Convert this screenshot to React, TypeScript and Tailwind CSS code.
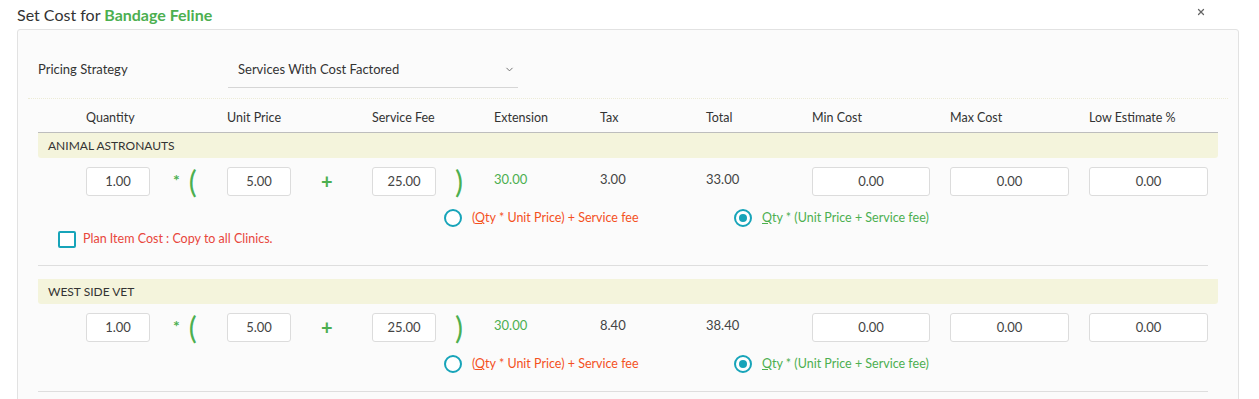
import { ChevronDown, X } from 'lucide-react'

interface Clinic {
  name: string
  qty: string
  unit: string
  fee: string
  ext: string
  tax: string
  total: string
  showCopy?: boolean
}

const clinics: Clinic[] = [
  { name: 'ANIMAL ASTRONAUTS', qty: '1.00', unit: '5.00', fee: '25.00', ext: '30.00', tax: '3.00', total: '33.00', showCopy: true },
  { name: 'WEST SIDE VET', qty: '1.00', unit: '5.00', fee: '25.00', ext: '30.00', tax: '8.40', total: '38.40' },
]

const headers = ['Quantity', 'Unit Price', 'Service Fee', 'Extension', 'Tax', 'Total', 'Min Cost', 'Max Cost', 'Low Estimate %']

const cols = 'grid grid-cols-[141px_145px_122px_106px_106px_106px_138px_139px_119px] pl-[48px]'

function NumBox({ value, w }: { value: string; w: string }) {
  return (
    <div className={`${w} h-[29px] bg-white border border-[#dcdcdc] rounded-[3px] flex items-center justify-center text-[13px] text-[#444]`}>
      {value}
    </div>
  )
}

function Radio({ checked }: { checked?: boolean }) {
  return (
    <span className="w-[18px] h-[18px] shrink-0 rounded-full border-2 border-[#17a4b9] flex items-center justify-center bg-white">
      {checked && <span className="w-[8px] h-[8px] rounded-full bg-[#17a4b9]" />}
    </span>
  )
}

function ClinicBlock({ c }: { c: Clinic }) {
  return (
    <div>
      <div className="h-[25px] bg-[#f4f4dc] rounded-b-[3px] pl-[10px] flex items-center text-[12px] text-[#333]">
        {c.name}
      </div>

      {/* inputs */}
      <div className={`${cols} mt-[9px] h-[29px]`}>
        <div className="flex items-start">
          <NumBox value={c.qty} w="w-[64px]" />
          <span className="ml-[23px] mt-[5px] text-[16px] font-bold text-[#4caf50] leading-none">*</span>
          <span className="ml-[9px] -mt-[3px] text-[30px] text-[#4caf50] leading-[34px]">(</span>
        </div>
        <div className="flex items-start">
          <NumBox value={c.unit} w="w-[64px]" />
          <span className="ml-[30px] mt-[4px] text-[20px] font-bold text-[#4caf50] leading-[20px]">+</span>
        </div>
        <div className="flex items-start">
          <NumBox value={c.fee} w="w-[64px]" />
          <span className="ml-[19px] -mt-[3px] text-[30px] text-[#4caf50] leading-[34px]">)</span>
        </div>
        <div className="text-[13px] text-[#4caf50] pt-[4px] leading-[16px]">{c.ext}</div>
        <div className="text-[13px] text-[#444] pt-[4px] leading-[16px]">{c.tax}</div>
        <div className="text-[13px] text-[#444] pt-[4px] leading-[16px]">{c.total}</div>
        <NumBox value="0.00" w="w-[118px]" />
        <NumBox value="0.00" w="w-[119px]" />
        <NumBox value="0.00" w="w-[119px]" />
      </div>

      {/* formula choice */}
      <div className="flex items-center h-[18px] mt-[13px] pl-[406px] text-[12.5px]">
        <div className="w-[290px] flex items-center">
          <Radio />
          <span className="ml-[10px] text-[#f4511e]">
            (<span className="underline">Q</span>ty * Unit Price) + Service fee
          </span>
        </div>
        <div className="flex items-center">
          <Radio checked />
          <span className="ml-[10px] text-[#4caf50]">
            <span className="underline">Q</span>ty * (Unit Price + Service fee)
          </span>
        </div>
      </div>

      {c.showCopy ? (
        <div className="flex items-center h-[17px] mt-[4px] pl-[20px] text-[12.5px]">
          <span className="w-[18px] h-[17px] border-2 border-[#17a4b9] rounded-[2px] bg-white" />
          <span className="ml-[7px] text-[#e8463b]">Plan Item Cost : Copy to all Clinics.</span>
        </div>
      ) : null}

      <div className={`border-t border-[#dedede] mr-[10px] ${c.showCopy ? 'mt-[17px]' : 'mt-[18px]'} mb-[13px]`} />
    </div>
  )
}

export default function App() {
  return (
    <div className="w-[1259px] h-[399px] overflow-hidden bg-white font-['Lato',sans-serif] text-[#333]">
      <div className="h-[29px] flex items-center justify-between pl-[17px] pr-[53px]">
        <h4 className="text-[16px] leading-none">
          Set Cost for <span className="text-[#4caf50] font-bold">Bandage Feline</span>
        </h4>
        <X className="w-[10px] h-[10px] text-[#666] -mt-[5px]" strokeWidth={3} />
      </div>

      <div className="ml-[17px] w-[1222px] h-[400px] border border-[#e2e2e2] rounded-[3px] bg-[#fbfbfb] px-[10px] pt-[22px]">
        {/* pricing strategy */}
        <div className="flex items-center pl-[10px] h-[36px] text-[13px]">
          <span className="w-[190px]">Pricing Strategy</span>
          <div className="w-[290px] h-[36px] border-b border-[#d6d6d6] flex items-center justify-between pl-[10px] pr-[3px]">
            <span>Services With Cost Factored</span>
            <ChevronDown className="w-[11px] h-[11px] text-[#666]" strokeWidth={2} />
          </div>
        </div>
        <div className="mt-[10px] border-t border-dotted border-[#ecebd6]" />

        <div className="px-[10px]">
          <div className={`${cols} h-[34px] pt-[10px] border-b border-[#bdbdbd] text-[12.5px] leading-[18px]`}>
            {headers.map(h => (
              <span key={h}>{h}</span>
            ))}
          </div>
          {clinics.map(c => (
            <ClinicBlock key={c.name} c={c} />
          ))}
        </div>
      </div>
    </div>
  )
}
